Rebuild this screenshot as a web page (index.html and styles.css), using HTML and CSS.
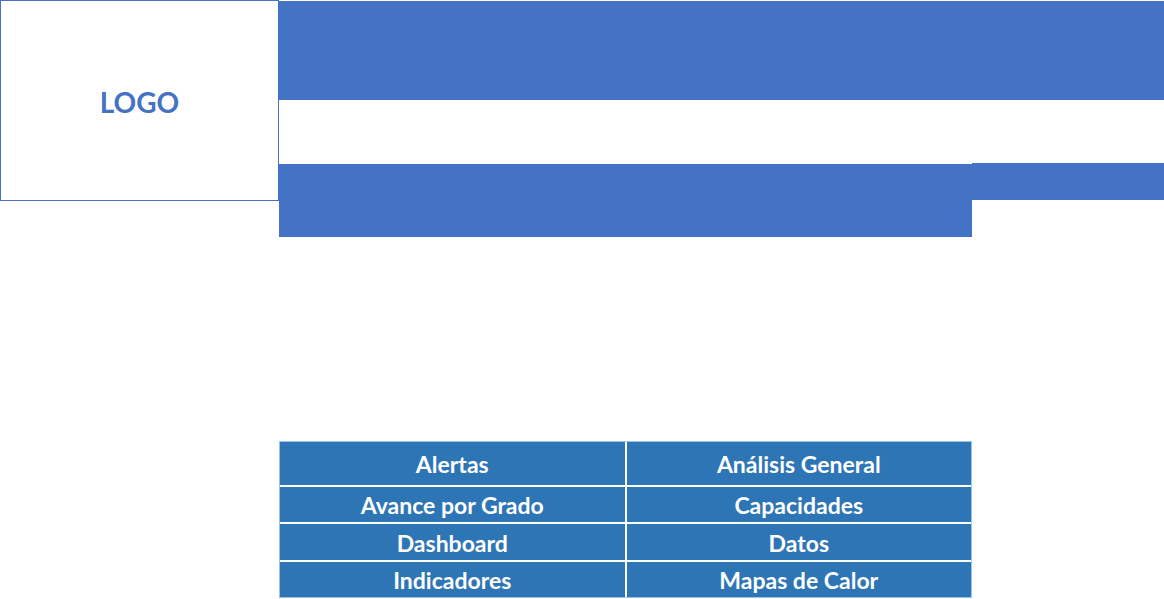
FILE: index.html
```html
<!DOCTYPE html>
<html lang="es">

<head>
    <meta charset="UTF-8">
    <meta name="viewport" content="width=device-width, initial-scale=1.0">
    <title>Menú</title>
    <link rel="stylesheet" href="styles.css">
</head>

<body>
    <div class="header">
        <div class="logo-box">LOGO</div>
        <div class="band band-top"></div>
        <div class="band band-mid"></div>
        <div class="band band-side"></div>
    </div>

    <div class="menu">
        <div class="menu-cell">Alertas</div>
        <div class="menu-cell">Análisis General</div>
        <div class="menu-cell">Avance por Grado</div>
        <div class="menu-cell">Capacidades</div>
        <div class="menu-cell row-low">Dashboard</div>
        <div class="menu-cell row-low">Datos</div>
        <div class="menu-cell">Indicadores</div>
        <div class="menu-cell">Mapas de Calor</div>
    </div>
</body>

</html>
```

FILE: styles.css
```css
body {
    margin: 0;
    background-color: #ffffff;
    font-family: Lato, "Liberation Sans", sans-serif;
}

/* Header: logo box plus the blue bands */
.header {
    display: grid;
    grid-template-columns: 279px 693px 1fr;
    grid-template-rows: 1px 99px 63px 37px 37px;
}

.logo-box {
    grid-column: 1;
    grid-row: 1 / 5;
    box-sizing: border-box;
    height: 201px;
    border: 1.5px solid #4472c4;
    display: flex;
    align-items: center;
    justify-content: center;
    color: #4472c4;
    font-weight: bold;
    font-size: 28px;
    padding-top: 2px;
}

.band {
    background-color: #4472c4;
}

.band-top {
    grid-column: 2 / 4;
    grid-row: 2;
}

.band-mid {
    grid-column: 2;
    grid-row: 4 / 6;
    margin-top: 1px;
}

.band-side {
    grid-column: 3;
    grid-row: 4;
}

/* Menu table */
.menu {
    margin: 204px 0 0 279px;
    width: 693px;
    box-sizing: border-box;
    display: grid;
    grid-template-columns: 1fr 1fr;
    grid-template-rows: 43px 35px 36px 35px;
    gap: 2px;
    background-color: #ffffff;
    border: 1px solid #9dc3e6;
}

.menu-cell {
    background-color: #2e75b6;
    color: #ffffff;
    font-weight: bold;
    font-size: 23px;
    display: flex;
    align-items: center;
    justify-content: center;
}

.row-low {
    padding-top: 2px;
}
```
